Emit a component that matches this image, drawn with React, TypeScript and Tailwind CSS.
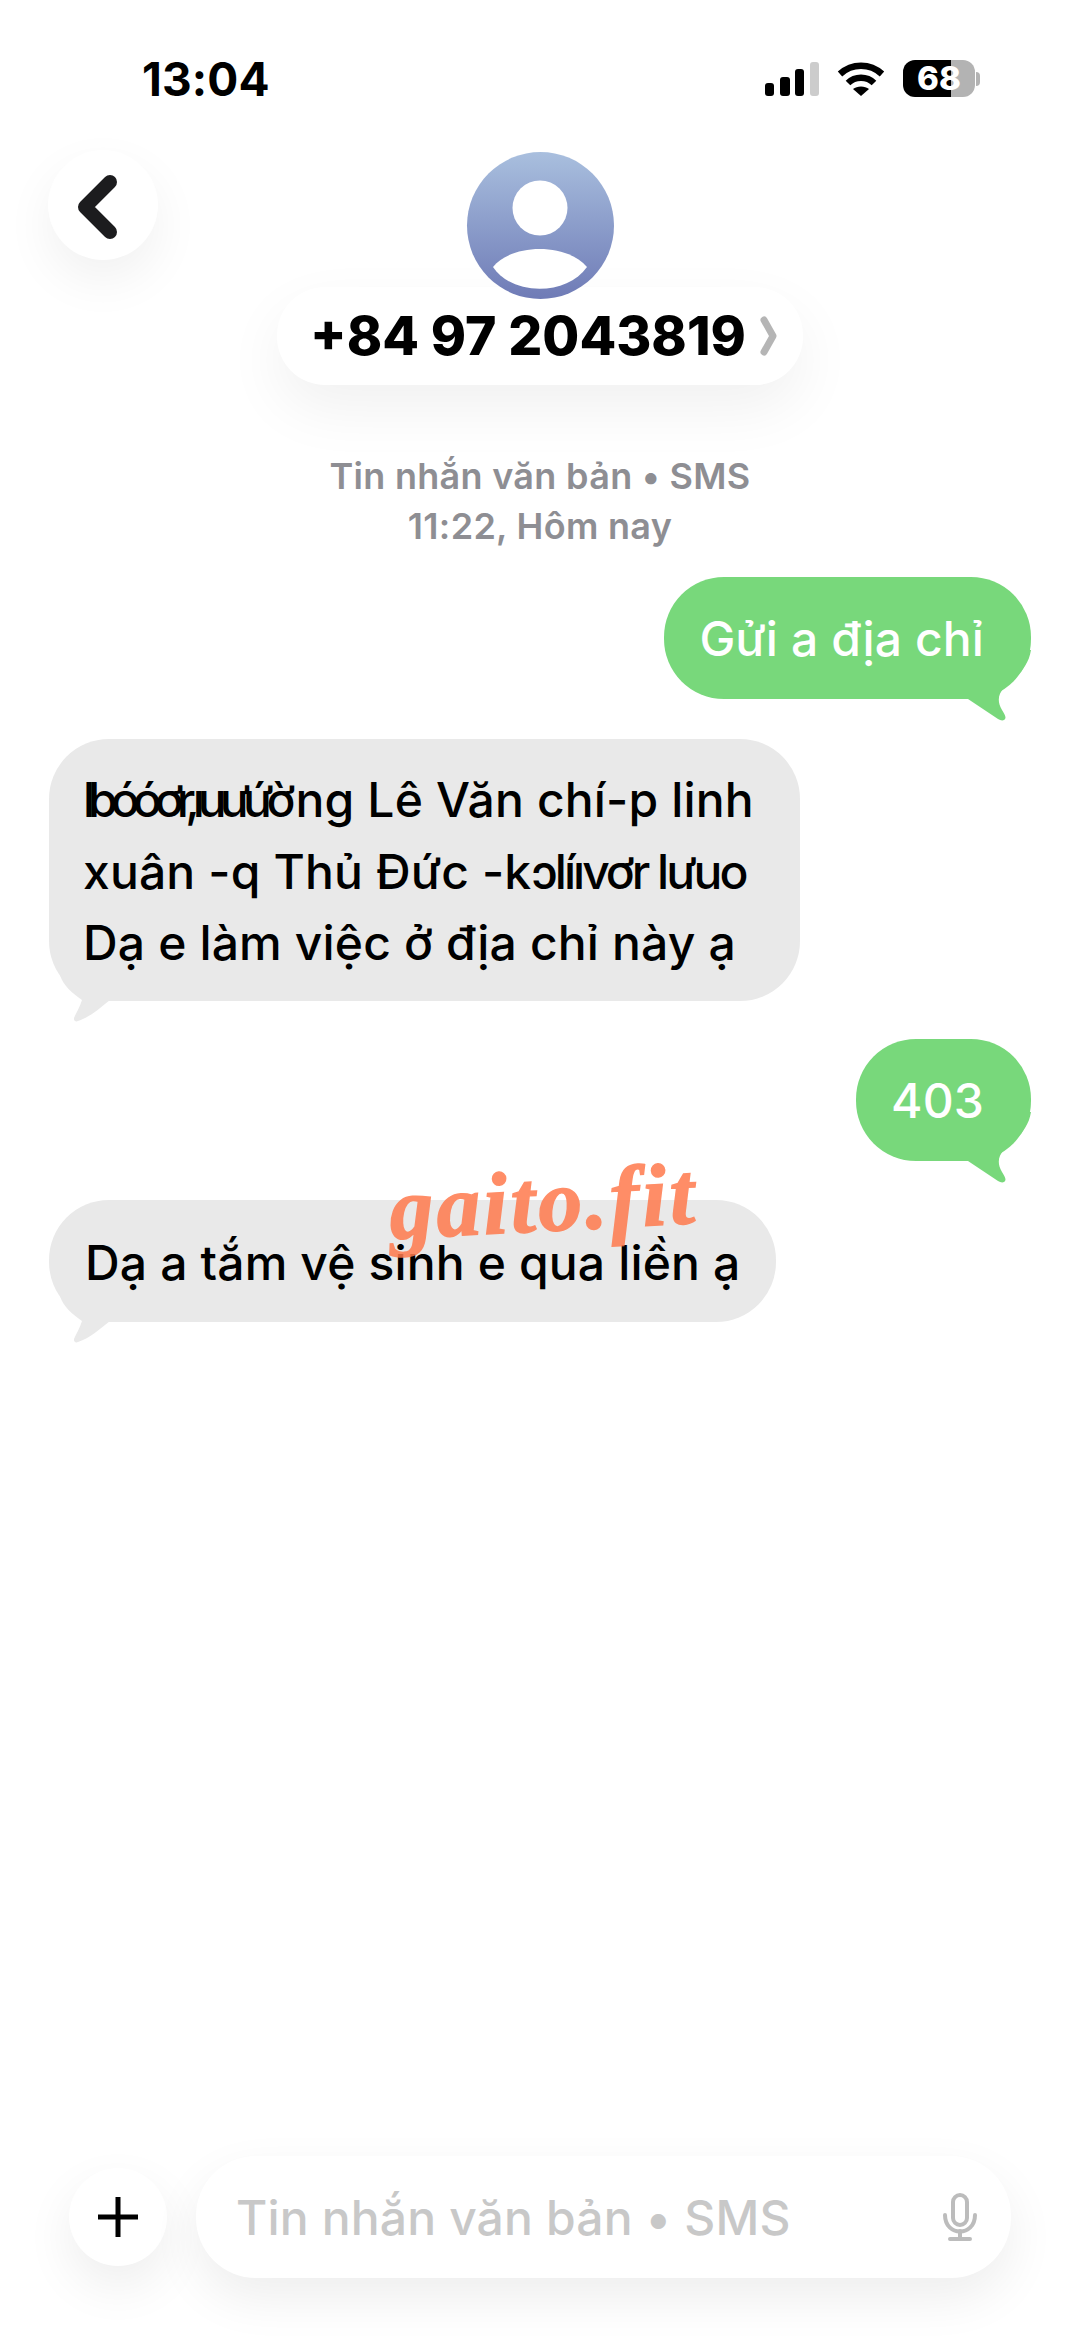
function SignalIcon() {
  return (
    <svg width="54" height="34" viewBox="0 0 54 34">
      <rect x="0" y="21" width="9" height="13" rx="3" fill="#000" />
      <rect x="15" y="15" width="10" height="19" rx="3" fill="#000" />
      <rect x="30" y="7" width="9" height="27" rx="3" fill="#000" />
      <rect x="45" y="0" width="9" height="34" rx="3" fill="#cccccc" />
    </svg>
  );
}

function WifiIcon() {
  return (
    <svg width="48" height="34" viewBox="0 0 48 34" fill="none">
      <path d="M3 12C15 1 33 1 45 12" stroke="#000" strokeWidth="6.5" />
      <path d="M11 21C18 14 30 14 37 21" stroke="#000" strokeWidth="6.5" />
      <path d="M16 27C20 23.5 28 23.5 32 27L24 34Z" fill="#000" />
    </svg>
  );
}

function BatteryIcon() {
  return (
    <div className="flex items-center gap-[1px]">
      <div className="flex h-[37px] w-[72px] items-center justify-center rounded-[12px] bg-[linear-gradient(90deg,#000_66%,#b3b3b3_66%)]">
        <span className="text-[33px] leading-none font-extrabold text-white">68</span>
      </div>
      <div className="h-[14px] w-[4px] rounded-r-full bg-[#b3b3b3]" />
    </div>
  );
}

function GrayTail() {
  return (
    <svg
      className="absolute -bottom-[24px] left-[11px]"
      width="60"
      height="50"
      viewBox="0 0 60 50"
    >
      <path
        d="M0 0C3 10 12 18 22 25C20 32 16 38 14 43C13.5 46 16 47 18 46C30 42 40 33 50 25L50 0Z"
        fill="#e9e9e9"
      />
    </svg>
  );
}

function GreenTail() {
  return (
    <svg
      className="absolute -right-[4px] -bottom-[26px]"
      width="75"
      height="75"
      viewBox="0 0 75 75"
    >
      <path
        d="M0 0L71 0C68 20 52 30 44 38C38 44 37 52 42 60C45 65 47 68 44 70C42 71 40 70 38 69L8 49L0 49Z"
        fill="#78d87b"
      />
    </svg>
  );
}

function Sent({ text }: { text: string }) {
  return (
    <div className="flex justify-end pr-[49px]">
      <div className="relative rounded-[60px] bg-[#78d87b] pt-[26px] pr-[47px] pb-[25px] pl-[35px] tracking-[0.1px] text-white">
        <span className="relative z-10">{text}</span>
        <GreenTail />
      </div>
    </div>
  );
}

export default function App() {
  return (
    <div className="flex h-[2347px] w-[1080px] flex-col overflow-hidden bg-white font-['Inter','Noto_Sans',sans-serif] text-[48px] leading-[71px] font-medium tracking-[0.15px] text-black">
      <div className="flex h-[150px] items-start justify-between pt-[60px] pr-[100px] pl-[142px]">
        <span className="text-[46px] leading-[38px] font-bold">13:04</span>
        <div className="flex items-center gap-[18px]">
          <SignalIcon />
          <WifiIcon />
          <BatteryIcon />
        </div>
      </div>

      <div className="grid grid-cols-[1fr_auto_1fr] px-[48px]">
        <div className="flex h-[110px] w-[110px] items-center justify-center rounded-full bg-white shadow-[0_20px_50px_rgba(0,0,0,0.06)]">
          <svg width="110" height="110" viewBox="0 0 110 110" fill="none">
            <path
              d="M62 32L37 57L62 82"
              stroke="#1c1c1e"
              strokeWidth="14"
              strokeLinecap="round"
              strokeLinejoin="round"
            />
          </svg>
        </div>
        <div className="flex flex-col items-center pt-[2px]">
          <div className="relative z-10 h-[147px] w-[147px] rounded-full bg-linear-to-b from-[#a9bfde] to-[#6f7bb6]">
            <svg width="147" height="147" viewBox="0 0 147 147">
              <circle cx="73" cy="56" r="27.5" fill="#fff" />
              <path d="M26 115C45 91 100 91 120 115C100 144 45 144 26 115Z" fill="#fff" />
            </svg>
          </div>
          <div className="-mt-[12px] flex h-[98px] w-[526px] items-center gap-[14px] rounded-[48px] bg-white pl-[33px] shadow-[0_24px_60px_rgba(0,0,0,0.06)]">
            <span className="text-[53.5px] leading-none font-extrabold tracking-normal whitespace-nowrap">
              +84 97 2043819
            </span>
            <svg width="18" height="40" viewBox="0 0 18 40" fill="none">
              <path
                d="M4 4L13 20L4 36"
                stroke="#b5b5b5"
                strokeWidth="7"
                strokeLinecap="round"
                strokeLinejoin="round"
              />
            </svg>
          </div>
        </div>
        <div />
      </div>

      <div className="mt-[66px] text-center text-[36px] leading-[50px] font-semibold tracking-[0.3px] text-[#8e8e93]">
        <p>Tin nhắn văn bản • SMS</p>
        <p>11:22, Hôm nay</p>
      </div>

      <div className="mt-[26px] flex flex-col">
        <Sent text="Gửi a địa chỉ" />

        <div className="mt-[40px] flex pl-[49px]">
          <div className="relative w-[751px] rounded-[60px] bg-[#e9e9e9] pt-[25px] pb-[22px] pl-[34px]">
            <p className="relative z-10 leading-[71.5px] whitespace-nowrap">
              <span className="tracking-[-7px]">lbóóơr,ıuưứ</span>
              <span>ờng Lê Văn chí-p linh</span>
              <br />
              xuân -q Thủ Đức -k<span className="tracking-[-3px]">ɔlíıvơr lưuo</span>
              <br />
              Dạ e làm việc ở địa chỉ này ạ
            </p>
            <GrayTail />
          </div>
        </div>

        <div className="mt-[38px]">
          <Sent text="403" />
        </div>

        <div className="mt-[39px] flex pl-[49px]">
          <div className="relative rounded-[60px] bg-[#e9e9e9] pt-[27px] pr-[36px] pb-[24px] pl-[36px]">
            <p className="relative z-10 whitespace-nowrap">Dạ a tắm vệ sinh e qua liền ạ</p>
            <GrayTail />
            <span className="absolute -top-[58px] left-[340px] z-20 -rotate-3 font-['Liberation_Serif',serif] text-[88px] leading-[120px] font-bold tracking-[3px] whitespace-nowrap text-[#ff7a4d] italic opacity-85 [-webkit-text-stroke:1.5px_#ff7a4d]">
              gaito.fit
            </span>
          </div>
        </div>
      </div>

      <div className="mt-auto flex items-center gap-[29px] pr-[69px] pb-[69px] pl-[69px]">
        <div className="flex h-[98px] w-[98px] items-center justify-center rounded-full bg-white shadow-[0_20px_50px_rgba(0,0,0,0.07)]">
          <svg width="40" height="40" viewBox="0 0 40 40">
            <path d="M20 0V40M0 20H40" stroke="#000" strokeWidth="5" strokeLinecap="round" />
          </svg>
        </div>
        <div className="flex h-[122px] flex-1 items-center justify-between rounded-[60px] bg-white pr-[34px] pl-[40px] text-[#c8c8c8] shadow-[0_20px_50px_rgba(0,0,0,0.07)]">
          <span>Tin nhắn văn bản • SMS</span>
          <svg width="34" height="48" viewBox="0 0 34 48" fill="none" stroke="#bcbcbc">
            <rect x="10" y="2" width="14" height="30" rx="7" strokeWidth="4" />
            <path d="M2 22C2 44 32 44 32 22" strokeWidth="4" strokeLinecap="round" />
            <path d="M17 38V45M7 46H27" strokeWidth="4" strokeLinecap="round" />
          </svg>
        </div>
      </div>
    </div>
  );
}
